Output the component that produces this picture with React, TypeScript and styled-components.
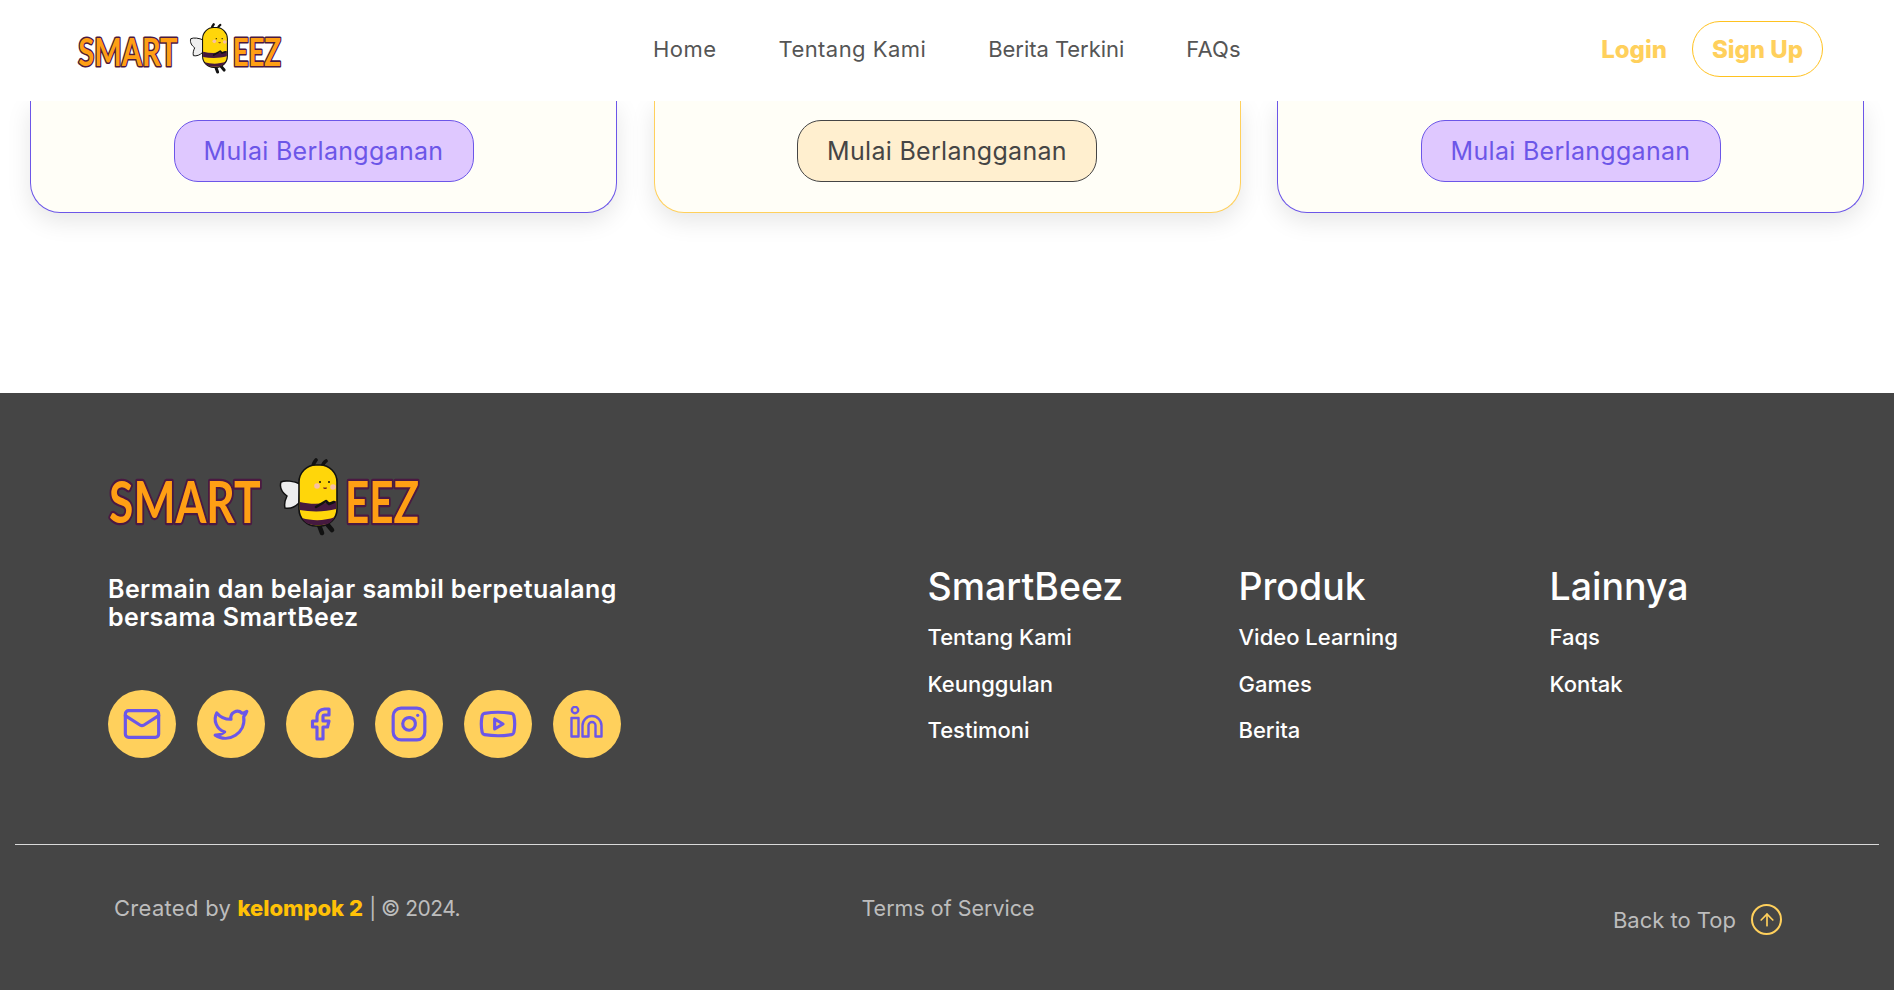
import styled, { createGlobalStyle } from "styled-components";
import { Mail, Twitter, Facebook, Instagram, Youtube, ArrowUp } from "lucide-react";

const purple = "#6c56e8";
const yellow = "#ffd05c";

const navItems = [
  { label: "Home", spacing: 0.45 },
  { label: "Tentang Kami", spacing: 0.45 },
  { label: "Berita Terkini", spacing: -0.05 },
  { label: "FAQs", spacing: 0.2 },
];

const plans = [
  { id: 1, featured: false },
  { id: 2, featured: true },
  { id: 3, featured: false },
];

const footerColumns = [
  { title: "SmartBeez", links: ["Tentang Kami", "Keunggulan", "Testimoni"] },
  { title: "Produk", links: ["Video Learning", "Games", "Berita"] },
  { title: "Lainnya", links: ["Faqs", "Kontak"] },
];

function LinkedinOutline() {
  return (
    <LinkedinSvg width="34" height="32" viewBox="0 0 34 32" fill="none" stroke={purple} strokeWidth="2.4" strokeLinejoin="round">
      <circle cx="5" cy="4" r="3.200" />
      <rect x="1.500" y="12" width="7" height="18.500" />
      <path d="M12.500 30.500V19.500a9.500 9.500 0 0 1 19 0v11h-6v-11a3.500 3.500 0 0 0-7 0v11z" />
    </LinkedinSvg>
  );
}

function Logo({ width }: { width: number }) {
  return (
    <svg width={width} viewBox="0 0 315 79" role="img" aria-label="SmartBeez">
      <g fontFamily="'Lato', sans-serif" fontWeight="700" fontSize="57" fill="#ff9f14" stroke="#4a1942" strokeWidth="4.600" paintOrder="stroke" strokeLinejoin="round">
        <text transform="translate(2 65) scale(0.78 1)">SMART</text>
        <text transform="translate(238 65) scale(0.74 1)">EEZ</text>
      </g>
      {/* wing */}
      <path d="M193 26c-6-3-15-4-19-2-2 6 2 11 6 14-2 4-3 8-2 12 5 1 10-1 14-5z" fill="#eeeeee" stroke="#111" strokeWidth="1.500" />
      {/* antennae and legs */}
      <path d="M206 10c0-4 1-6 3-8M215 9c1-3 2-5 4-6" stroke="#111" strokeWidth="3.600" strokeLinecap="round" fill="none" />
      <path d="M212 67l3 8M220 66l5 6" stroke="#111" strokeWidth="4.600" strokeLinecap="round" />
      <rect x="192" y="7" width="38" height="61" rx="17" fill="#ffd60a" stroke="#111" strokeWidth="1.600" />
      {/* stripes */}
      <path d="M192.800 44c12 3 25 2 36.400-1v8c-11 3-25 3-36.400 1z" fill="#45193f" />
      <path d="M195 60c10 3 23 3 33-1-3 5-7 8-13 8h-7c-6 0-10-2-13-7z" fill="#45193f" />
      {/* arms */}
      <path d="M209 49l10-6 3 3 5-2" stroke="#111" strokeWidth="2.600" fill="none" strokeLinecap="round" strokeLinejoin="round" />
      {/* face */}
      <circle cx="210" cy="28" r="2.800" fill="#f8bfa5" />
      <circle cx="226" cy="29" r="2.800" fill="#f8bfa5" />
      <circle cx="213" cy="24" r="1" fill="#111" />
      <circle cx="222" cy="24" r="1" fill="#111" />
      <path d="M216 29.500h4c0 2-3.500 2-4 0z" fill="#7a2a20" />
    </svg>
  );
}

export default function App() {
  return (
    <Page>
      <GlobalStyle />
      <Header>
        <LogoSlot>
          <Logo width={206} />
        </LogoSlot>
        <Nav>
          {navItems.map((item) => (
            <NavLink key={item.label} $spacing={item.spacing}>
              {item.label}
            </NavLink>
          ))}
        </Nav>
        <Auth>
          <Login>Login</Login>
          <SignUp>Sign Up</SignUp>
        </Auth>
      </Header>

      <Plans>
        {plans.map((plan) => (
          <PlanCard key={plan.id} $featured={plan.featured}>
            <PlanButton $featured={plan.featured}>Mulai Berlangganan</PlanButton>
          </PlanCard>
        ))}
      </Plans>

      <Footer>
        <FooterTop>
          <Brand>
            <Logo width={315} />
            <Tagline>
              Bermain dan belajar sambil berpetualang
              <br />
              bersama SmartBeez
            </Tagline>
            <Socials>
              <Social><Mail size={40} color={purple} strokeWidth={1.9} /></Social>
              <Social><Twitter size={38} color={purple} strokeWidth={2} /></Social>
              <Social><Facebook size={36} color={purple} strokeWidth={2.1} /></Social>
              <Social><Instagram size={38} color={purple} strokeWidth={2} /></Social>
              <Social><Youtube size={40} color={purple} strokeWidth={1.9} /></Social>
              <Social><LinkedinOutline /></Social>
            </Socials>
          </Brand>
          <Columns>
            {footerColumns.map((col) => (
              <Column key={col.title}>
                <ColumnTitle>{col.title}</ColumnTitle>
                {col.links.map((link) => (
                  <ColumnLink key={link}>{link}</ColumnLink>
                ))}
              </Column>
            ))}
          </Columns>
        </FooterTop>
        <Divider />
        <FooterBottom>
          <Credit>
            <CreatedBy>Created by</CreatedBy> <strong>kelompok 2</strong> <Copyright>| © 2024.</Copyright>
          </Credit>
          <Terms>Terms of Service</Terms>
          <BackToTop>
            Back to Top
            <UpIcon>
              <ArrowUp size={20} color={yellow} strokeWidth={2} />
            </UpIcon>
          </BackToTop>
        </FooterBottom>
      </Footer>
    </Page>
  );
}

const GlobalStyle = createGlobalStyle`
  html, body {
    margin: 0;
    padding: 0;
    background: #ffffff;
    font-family: "Inter", "Noto Sans", sans-serif;
  }
`;

const Page = styled.div`
  display: flex;
  flex-direction: column;
  height: 990px;
  overflow: hidden;
`;

const Header = styled.header`
  position: relative;
  z-index: 2;
  display: flex;
  align-items: center;
  height: 101px;
  flex-shrink: 0;
  box-sizing: border-box;
  padding: 0 71px 3px 77px;
  background: #ffffff;
`;

const LogoSlot = styled.div`
  display: flex;
  width: 576px;
`;

const Nav = styled.nav`
  display: flex;
  gap: 62px;
`;

const NavLink = styled.a<{ $spacing: number }>`
  color: #555555;
  font-size: 22px;
  letter-spacing: ${(p) => p.$spacing}px;
`;

const Auth = styled.div`
  display: flex;
  align-items: center;
  gap: 25px;
  margin-left: auto;
`;

const Login = styled.a`
  color: ${yellow};
  font-size: 24px;
  font-weight: 800;
`;

const SignUp = styled.a`
  display: flex;
  align-items: center;
  justify-content: center;
  width: 131px;
  height: 56px;
  box-sizing: border-box;
  border: 1.5px solid #ffc220;
  border-radius: 28px;
  color: ${yellow};
  font-size: 24px;
  font-weight: 800;
`;

const Plans = styled.section`
  display: grid;
  grid-template-columns: repeat(3, 1fr);
  gap: 36.500px;
  height: 292px;
  flex-shrink: 0;
  padding: 0 30px;
  box-sizing: border-box;
`;

const PlanCard = styled.div<{ $featured: boolean }>`
  display: flex;
  justify-content: center;
  align-items: flex-start;
  height: 112px;
  padding-top: 19px;
  box-sizing: border-box;
  background: #fffef7;
  border: 1px solid ${(p) => (p.$featured ? yellow : purple)};
  border-top: none;
  border-radius: 0 0 30px 30px;
  box-shadow: 0 8px 24px rgba(0, 0, 0, 0.1);
`;

const PlanButton = styled.button<{ $featured: boolean }>`
  width: 300px;
  height: 62px;
  border: 1px solid ${(p) => (p.$featured ? "#454545" : purple)};
  border-radius: 24px;
  background: ${(p) => (p.$featured ? "#ffefcf" : "#dfc8ff")};
  color: ${(p) => (p.$featured ? "#454545" : purple)};
  font-family: inherit;
  font-size: 25px;
  letter-spacing: 0.3px;
`;

const Footer = styled.footer`
  flex: 1;
  padding-top: 65px;
  background: #454545;
`;

const FooterTop = styled.div`
  display: flex;
  height: 386px;
  box-sizing: border-box;
  padding-left: 107px;
`;

const Brand = styled.div`
  display: flex;
  flex-direction: column;
  width: 820.500px;
`;

const Tagline = styled.p`
  margin: 38px 0 0 1px;
  color: #ffffff;
  font-size: 25px;
  font-weight: 600;
  letter-spacing: 0.4px;
  line-height: 28px;
`;

const Socials = styled.div`
  display: flex;
  gap: 21px;
  margin: 59px 0 0 1px;
`;

const Social = styled.a`
  display: flex;
  align-items: center;
  justify-content: center;
  width: 68px;
  height: 68px;
  border-radius: 50%;
  background: ${yellow};
`;

const LinkedinSvg = styled.svg`
  margin-top: -4px;
`;

const Columns = styled.div`
  display: grid;
  grid-template-columns: repeat(3, 311px);
  align-content: start;
  padding-top: 106px;
`;

const Column = styled.div`
  display: flex;
  flex-direction: column;
`;

const ColumnTitle = styled.h3`
  margin: 0 0 4px;
  color: #ffffff;
  font-size: 37.500px;
  font-weight: 500;
  line-height: 46px;
`;

const ColumnLink = styled.a`
  color: #ffffff;
  font-size: 22px;
  font-weight: 500;
  line-height: 46.500px;
`;

const Divider = styled.hr`
  margin: 0 15px;
  border: none;
  border-top: 1px solid #d9d9d9;
`;

const FooterBottom = styled.div`
  display: grid;
  grid-template-columns: 1fr auto 1fr;
  align-items: start;
  padding: 48px 112px 0 114px;
  color: #bdbdbd;
  font-size: 22px;
`;

const Credit = styled.div`
  line-height: 30px;

  strong {
    color: #ffc107;
    font-weight: 800;
  }
`;

const CreatedBy = styled.span`
  letter-spacing: 0.3px;
`;

const Copyright = styled.span`
  font-size: 21px;
  letter-spacing: -0.5px;
`;

const Terms = styled.div`
  font-size: 21.500px;
  line-height: 30px;
`;

const BackToTop = styled.a`
  display: flex;
  align-items: center;
  justify-content: flex-end;
  gap: 15px;
  margin-top: 11px;
`;

const UpIcon = styled.span`
  display: flex;
  align-items: center;
  justify-content: center;
  width: 31px;
  height: 31px;
  box-sizing: border-box;
  border: 2.500px solid ${yellow};
  border-radius: 50%;
`;
